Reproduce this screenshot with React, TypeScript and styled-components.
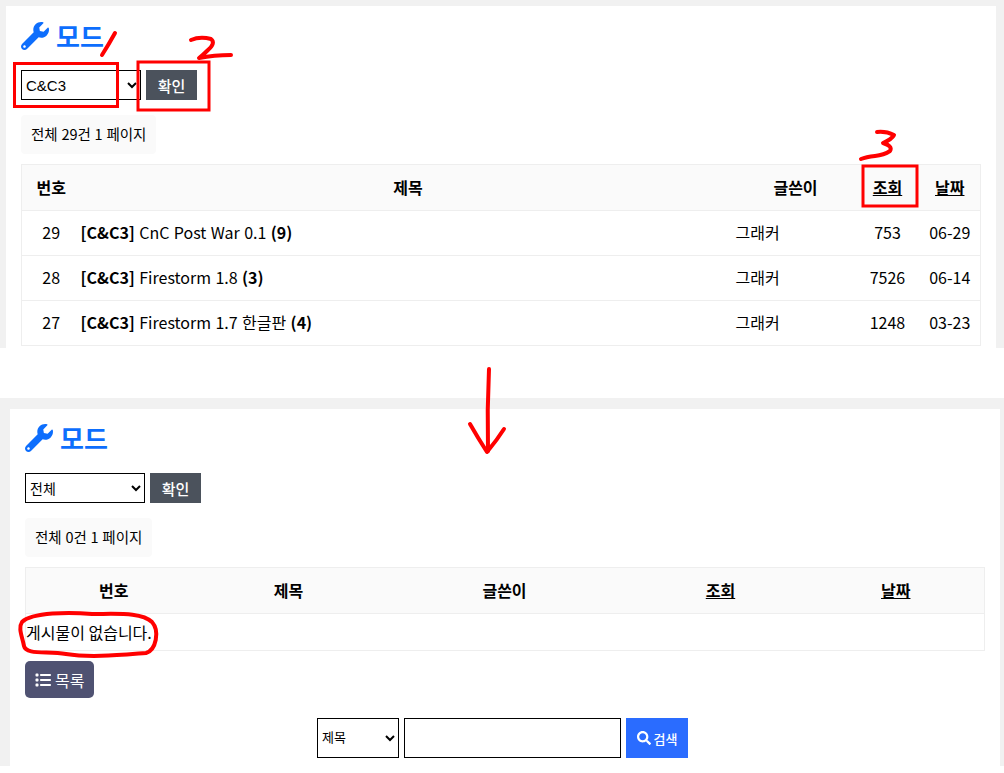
import React from "react";
import styled, { createGlobalStyle } from "styled-components";
import { FaSearch, FaWrench } from "react-icons/fa";
import { FaList } from "react-icons/fa6";

const Global = createGlobalStyle`
  html, body { margin: 0; padding: 0; background: #fff; }
  body { font-family: "Noto Sans CJK KR", "Noto Sans", sans-serif; font-size: 16px; color: #000; }
`;

const Stage = styled.div`
  position: relative;
  width: 1004px;
  height: 773px;
  overflow: hidden;
  background: #fff;
`;

const Shot = styled.section<{ $h: number; $pt: number; $pl: number; $pr: number }>`
  height: ${(p) => p.$h}px;
  box-sizing: border-box;
  padding: ${(p) => p.$pt}px ${(p) => p.$pr}px 0 ${(p) => p.$pl}px;
  background: #f1f1f1;
  overflow: hidden;
`;

const Gap = styled.div`
  height: 50px;
`;

const Panel = styled.div<{ $pl: number; $pr: number; $pt: number }>`
  height: 100%;
  box-sizing: border-box;
  padding: ${(p) => p.$pt}px ${(p) => p.$pr}px 0 ${(p) => p.$pl}px;
  background: #fff;
`;

const Title = styled.h2`
  display: flex;
  align-items: center;
  gap: 7px;
  margin: 0;
  height: 44px;
  color: #0d6efd;
  font-size: 26px;
  font-weight: 700;
  line-height: 44px;
  svg { width: 28px; height: 28px; }
`;

const FilterForm = styled.form<{ $mt: number }>`
  display: flex;
  gap: 5px;
  margin-top: ${(p) => p.$mt}px;
`;

const Select = styled.select<{ $w: number; $h: number; $fs: number; $latin?: boolean; $pb?: number }>`
  width: ${(p) => p.$w}px;
  height: ${(p) => p.$h}px;
  box-sizing: border-box;
  border: 1px solid #000;
  border-radius: 0;
  background-color: #fff;
  padding: 0 0 ${(p) => p.$pb || 0}px;
  font-family: ${(p) => (p.$latin ? `"Liberation Sans", sans-serif` : "inherit")};
  font-size: ${(p) => p.$fs}px;
  color: #000;
`;

const ConfirmButton = styled.button`
  width: 51px;
  height: 30px;
  border: 0;
  padding: 0;
  background: #4b525c;
  color: #fff;
  font-family: inherit;
  font-size: 15px;
  font-weight: 500;
`;

const Count = styled.div<{ $w: number }>`
  width: ${(p) => p.$w}px;
  box-sizing: border-box;
  margin-top: 15px;
  padding: 0 0 1px 10px;
  height: 39px;
  line-height: 37px;
  background: #fafafa;
  border-radius: 4px;
  font-size: 14.5px;
  word-spacing: 0.5px;
  white-space: nowrap;
`;

const Table = styled.table<{ $mt: number }>`
  display: table;
  width: 959px;
  margin-top: ${(p) => p.$mt}px;
  border-collapse: collapse;
  table-layout: fixed;
  font-size: 16px;
`;

const Col = styled.col<{ $w: number }>`
  width: ${(p) => p.$w}px;
`;

const Th = styled.th`
  height: 46px;
  padding: 0 0 2px;
  box-sizing: border-box;
  background: #fafafa;
  border: 1px solid #eee;
  border-width: 1px 0;
  font-weight: 700;
  text-align: center;
  &:first-child { border-left-width: 1px; }
  &:last-child { border-right-width: 1px; }
`;

const SortLink = styled.a`
  color: #000;
  text-decoration: underline;
`;

const Td = styled.td<{ $align?: string }>`
  height: 45px;
  padding: 0 0 2px;
  box-sizing: border-box;
  border-bottom: 1px solid #eee;
  text-align: ${(p) => p.$align || "center"};
  word-spacing: 0.8px;
  &:first-child { border-left: 1px solid #eee; }
  &:last-child { border-right: 1px solid #eee; }
  white-space: nowrap;
`;

const Strong = styled.b`
  font-weight: 700;
`;

const EmptyCell = styled.td`
  height: 36px;
  padding: 0;
  border: 1px solid #eee;
  border-top: 0;
  font-size: 16px;
`;

const ListButton = styled.button`
  display: flex;
  align-items: center;
  gap: 4px;
  width: 69px;
  height: 37px;
  margin-top: 10px;
  padding: 0 0 0 10px;
  border: 0;
  border-radius: 5px;
  background: #4f5272;
  color: #fff;
  font-family: inherit;
  font-size: 16px;
  svg { width: 16px; height: 16px; }
`;

const SearchForm = styled.form`
  display: flex;
  justify-content: center;
  gap: 5px;
  margin-top: 20px;
  padding-right: 5px;
`;

const SearchInput = styled.input`
  width: 217px;
  height: 40px;
  box-sizing: border-box;
  border: 1px solid #000;
  padding: 0 4px;
`;

const SearchButton = styled.button`
  display: flex;
  align-items: center;
  justify-content: center;
  gap: 3px;
  width: 62px;
  height: 40px;
  border: 0;
  padding: 0;
  background: #2a6cff;
  color: #fff;
  font-family: inherit;
  font-size: 13px;
  font-weight: 500;
  svg { width: 14px; height: 14px; }
`;

const Marks = styled.svg`
  position: absolute;
  inset: 0;
  pointer-events: none;
`;

const rows = [
  ["29", "CnC Post War 0.1", "9", "753", "06-29"],
  ["28", "Firestorm 1.8", "3", "7526", "06-14"],
  ["27", "Firestorm 1.7 한글판", "4", "1248", "03-23"],
];

export default function App() {
  return (
    <Stage>
      <Global />
      <Shot $h={348} $pt={6} $pl={6} $pr={8}>
        <Panel $pl={15} $pr={15} $pt={8}>
          <Title><FaWrench /> 모드</Title>
          <FilterForm $mt={12}>
            <Select $w={120} $h={30} $fs={15} $latin defaultValue="C&C3">
              <option>C&amp;C3</option>
            </Select>
            <ConfirmButton type="button">확인</ConfirmButton>
          </FilterForm>
          <Count $w={135}>전체 29건 1 페이지</Count>
          <Table $mt={10}>
            <colgroup>
              <Col $w={59} /><Col $w={655} /><Col $w={120} /><Col $w={64} /><Col $w={61} />
            </colgroup>
            <thead>
              <tr>
                <Th>번호</Th><Th>제목</Th><Th>글쓴이</Th>
                <Th><SortLink>조회</SortLink></Th><Th><SortLink>날짜</SortLink></Th>
              </tr>
            </thead>
            <tbody>
              {rows.map((r) => (
                <tr key={r[0]}>
                  <Td>{r[0]}</Td>
                  <Td $align="left"><Strong>[C&amp;C3]</Strong> {r[1]} <Strong>({r[2]})</Strong></Td>
                  <Td $align="left">그래커</Td>
                  <Td>{r[3]}</Td>
                  <Td>{r[4]}</Td>
                </tr>
              ))}
            </tbody>
          </Table>
        </Panel>
      </Shot>
      <Gap />
      <Shot $h={368} $pt={11} $pl={10} $pr={4}>
        <Panel $pl={15} $pr={15} $pt={7}>
          <Title><FaWrench /> 모드</Title>
          <FilterForm $mt={13}>
            <Select $w={120} $h={30} $fs={14} defaultValue="전체">
              <option>전체</option>
            </Select>
            <ConfirmButton type="button">확인</ConfirmButton>
          </FilterForm>
          <Count $w={127}>전체 0건 1 페이지</Count>
          <Table $mt={10}>
            <colgroup>
              <Col $w={176} /><Col $w={174} /><Col $w={258} /><Col $w={174} /><Col $w={177} />
            </colgroup>
            <thead>
              <tr>
                <Th>번호</Th><Th>제목</Th><Th>글쓴이</Th>
                <Th><SortLink>조회</SortLink></Th><Th><SortLink>날짜</SortLink></Th>
              </tr>
            </thead>
            <tbody>
              <tr><EmptyCell colSpan={5}>게시물이 없습니다.</EmptyCell></tr>
            </tbody>
          </Table>
          <ListButton type="button"><FaList /> 목록</ListButton>
          <SearchForm>
            <Select $w={82} $h={40} $fs={13} $pb={4} defaultValue="제목">
              <option>제목</option>
            </Select>
            <SearchInput />
            <SearchButton type="button"><FaSearch /> 검색</SearchButton>
          </SearchForm>
        </Panel>
      </Shot>
      <Marks width="1004" height="773" viewBox="0 0 1004 773" fill="none" stroke="#ff0000">
        <rect x="14.5" y="63.5" width="103" height="43" strokeWidth="3" />
        <rect x="138" y="62" width="71" height="48" strokeWidth="3" />
        <rect x="863" y="166" width="54" height="40" strokeWidth="3" />
        <g strokeWidth="4" strokeLinecap="round" strokeLinejoin="round">
          <path d="M115 33 Q109 44 102 55" />
          <path d="M191 40 Q200 36 211 39 Q216 43 208 50 Q203 55 199 58 Q214 55 231 55" />
          <path d="M877 132 Q886 131 894 135 Q892 139 883 143 Q893 146 890 151 Q884 155 875 156 Q866 157 861 159" />
          <path d="M489 369 Q487 410 488 451" />
          <path d="M470 424 Q478 438 487 452 Q497 440 504 429" />
          <path d="M22 622 C32 612 70 612 92 614 C118 614 142 612 152 622 C160 631 156 650 146 653 C120 655 90 658 66 654 C46 651 26 655 24 646 C22 636 18 628 22 622Z" />
        </g>
      </Marks>
    </Stage>
  );
}
